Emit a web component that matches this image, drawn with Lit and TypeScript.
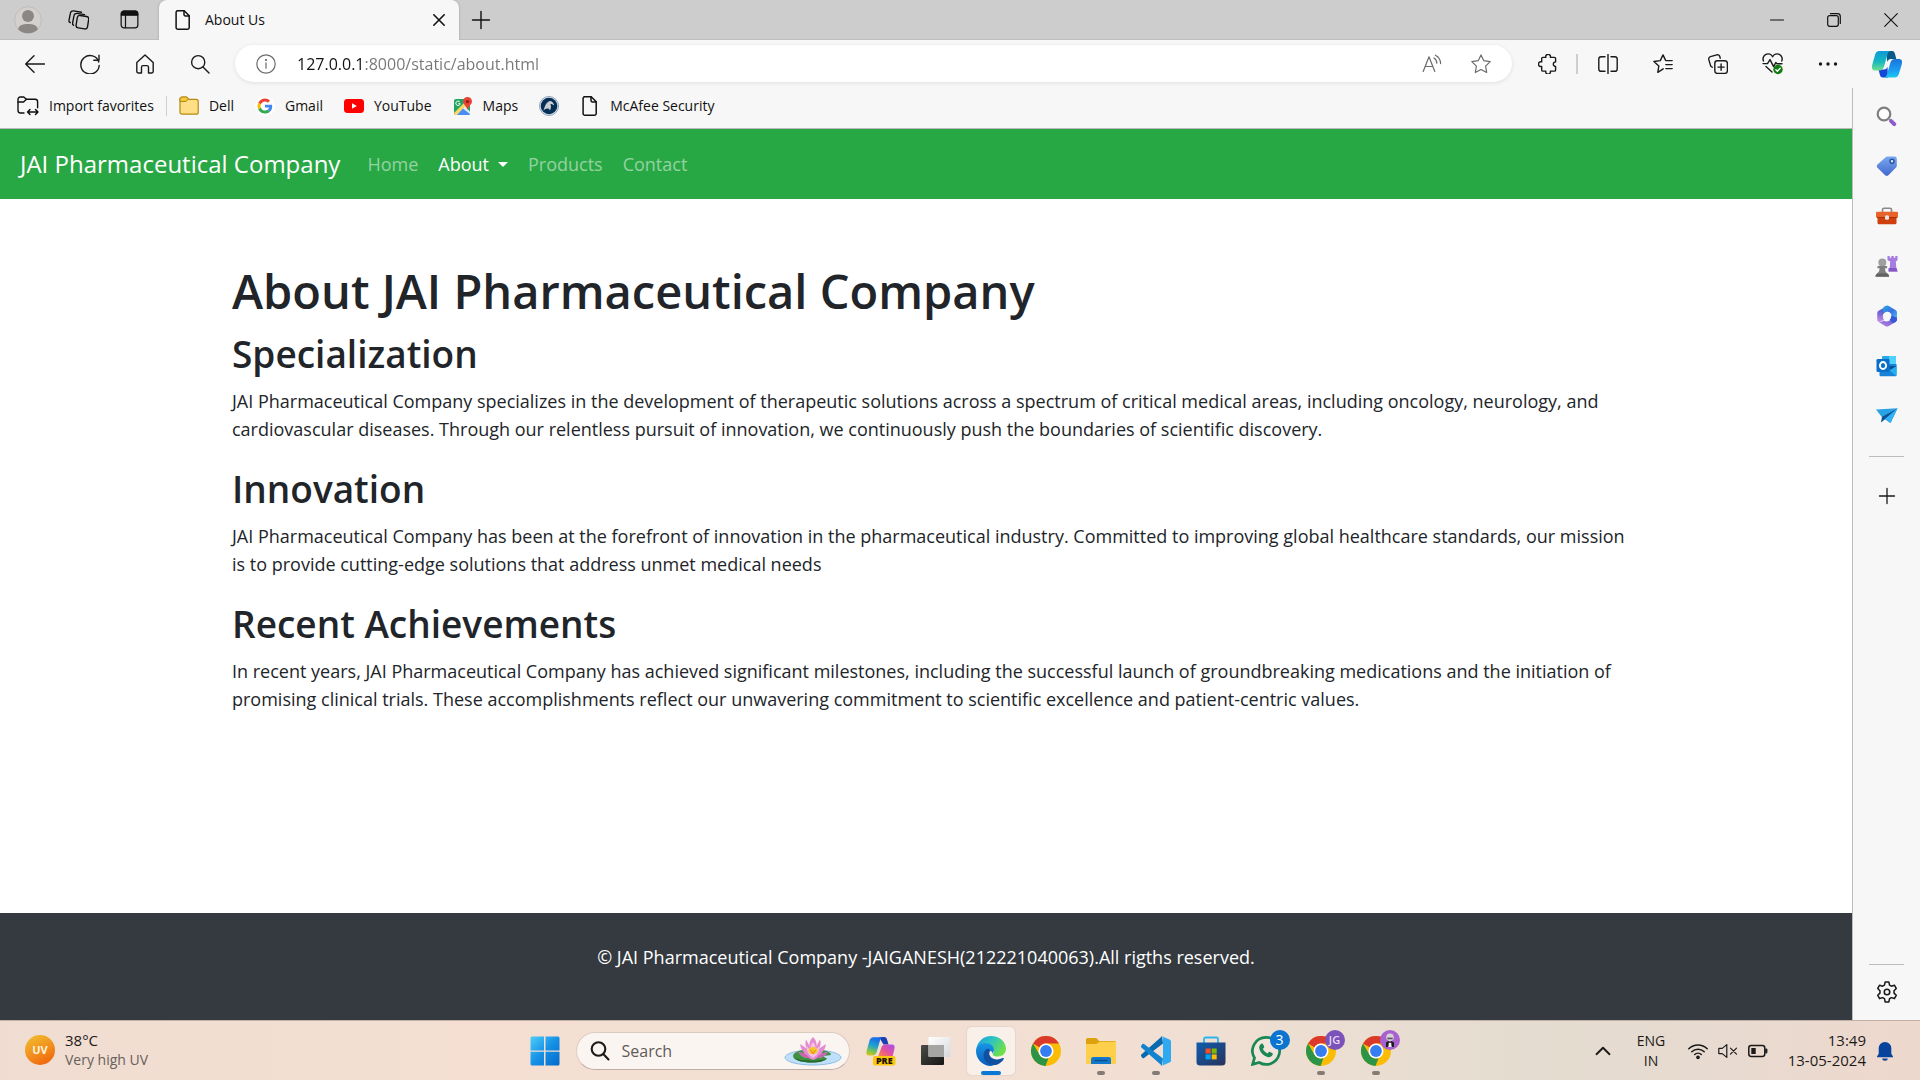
import { LitElement, html, css, svg, nothing } from "lit";
import { customElement, property } from "lit/decorators.js";
import type { TemplateResult } from "lit";

type Icon = TemplateResult;

/* Outline icon on a 20-unit grid. */
const line = (body: unknown, size = 20, width = 1.3): Icon => html`
  <svg width=${size} height=${size} viewBox="0 0 20 20" fill="none" stroke="currentColor"
    stroke-width=${width} stroke-linecap="round" stroke-linejoin="round" aria-hidden="true">${body}</svg>`;

/* Colour icon on its own grid. */
const art = (body: unknown, w: number, h = w, box = `0 0 ${w} ${h}`): Icon => html`
  <svg width=${w} height=${h} viewBox=${box} aria-hidden="true">${body}</svg>`;

const pageIcon = line(svg`<path d="M4 .8h7.2l5 5v11.6a1.8 1.8 0 0 1-1.8 1.8H4.9a1.8 1.8 0 0 1-1.8-1.8V2.6A1.8 1.8 0 0 1 4.9.8"/><path d="M11 1v3.6A1.4 1.4 0 0 0 12.4 6H16"/>`, 20, 1.5);

const icons = {
  avatar: art(svg`<circle cx="14" cy="14" r="13.3" fill="#d3d0cd" stroke="#bdb9b5" stroke-width=".8"/><circle cx="14" cy="10" r="6" fill="#8b8784"/><path d="M4 23.2C5.500 18.800 9 18 14 18s8.500.8 10 5.200A13.300 13.300 0 0 1 14 27.200 13.300 13.300 0 0 1 4 23.200z" fill="#8b8784"/>`, 28),
  workspaces: line(svg`<rect x="8.300" y="6.600" width="11" height="12" rx="2.400" transform="rotate(9 14 12)"/><path d="M5.400 15.500a2 2 0 0 1-1-2.300l1.300-6.800a2.600 2.600 0 0 1 3-2.200l7 1.200"/><path d="M2.200 13a2 2 0 0 1-1.200-2.400L2.300 4A2.600 2.600 0 0 1 5.300 1.800l7.500 1.300"/>`, 21),
  tabActions: line(svg`<rect x="1.200" y="1.200" width="17.600" height="17.600" rx="3"/><path d="M1.500 3.800A2.500 2.500 0 0 1 4 1.300h12a2.500 2.500 0 0 1 2.500 2.500v1.700h-17z" fill="currentColor"/><path d="M5.800 6v12.500"/>`, 19),
  close: line(svg`<path d="M4.800 4.800l10.400 10.400M15.200 4.800L4.800 15.200"/>`, 20, 1.6),
  plus: line(svg`<path d="M10 1.500v17M1.500 10h17"/>`, 20, 1.4),
  minimise: line(svg`<path d="M3.500 10h13"/>`, 20, 1.1),
  restore: line(svg`<rect x="3.700" y="5.700" width="10.600" height="10.600" rx="2"/><path d="M6.500 3.700h7a2.800 2.800 0 0 1 2.800 2.800v7"/>`, 20, 1.2),
  windowClose: line(svg`<path d="M3.700 3.700l12.600 12.600M16.300 3.700L3.700 16.300"/>`, 20, 1.1),
  back: line(svg`<path d="M19.500 10H.8M9 1.700L.7 10 9 18.300"/>`, 20, 1.4),
  refresh: line(svg`<path d="M18.800 8A9.200 9.200 0 1 0 19.200 11.500"/><path d="M19 1.200V6.300h-5.200"/>`, 20, 1.4),
  home: line(svg`<path d="M1.800 8.600L10 1l8.200 7.600v9a1.400 1.400 0 0 1-1.400 1.400h-3.300v-5.800a1.600 1.600 0 0 0-1.600-1.600H8.100a1.600 1.600 0 0 0-1.600 1.600V19H3.200a1.400 1.400 0 0 1-1.400-1.400z"/>`, 20, 1.4),
  search: line(svg`<circle cx="8.200" cy="8.200" r="6.600"/><path d="M13 13l6 6"/>`, 20, 1.4),
  info: line(svg`<circle cx="10" cy="10" r="9.200"/><path d="M10 8.800v5.400"/><circle cx="10" cy="6" r=".5" fill="currentColor"/>`, 20, 1.2),
  readAloud: line(svg`<path d="M1.200 17.500L7 2.800l5.800 14.700M3.200 12.500h7.600"/><path d="M12 4a6 6 0 0 1 2.800 5.200M13.400 1.200a9.500 9.500 0 0 1 5.200 8.400"/>`, 20, 1.2),
  star: line(svg`<path d="M10 .9l2.800 5.800 6.400.9-4.600 4.500 1.100 6.400L10 15.500l-5.700 3 1.100-6.400L.8 7.600l6.400-.9z"/>`, 20, 1.200),
  puzzle: line(svg`<path d="M4.900 3.400h2.900a2.400 2.400 0 1 1 4.600 0h4a1.200 1.200 0 0 1 1.200 1.200v3.300a2.300 2.300 0 1 0 0 4.600v3.400a1.200 1.200 0 0 1-1.200 1.200h-4a2.400 2.400 0 1 1-4.600 0H4.900a1.200 1.200 0 0 1-1.200-1.200v-3.500a2.400 2.400 0 1 1 0-4.500V4.600a1.200 1.200 0 0 1 1.200-1.200"/>`, 20, 1.4),
  split: line(svg`<path d="M7 2.700H3.200A2.400 2.400 0 0 0 .8 5.100v9.800a2.400 2.400 0 0 0 2.400 2.400H7M13 2.700h3.800a2.400 2.400 0 0 1 2.400 2.400v9.800a2.400 2.400 0 0 1-2.400 2.400H13M10 .5v19"/>`, 20, 1.4),
  favorites: line(svg`<path d="M10.200 14.800l-5.400 3.500 1-6.200L.9 7.500l6.400-.9L10 .9l2.500 5.200"/><path d="M12.800 6.600h6.400M12.800 10.600h6.400M12.800 14.600h6.400"/>`, 20, 1.4),
  collections: line(svg`<rect x="6.800" y="6.800" width="12.600" height="12.600" rx="2.600"/><path d="M13.100 10v6.200M10 13.100h6.200"/><path d="M4.200 13.200a2.400 2.400 0 0 1-1.700-1.800L.8 5.600a2.400 2.400 0 0 1 1.700-3L8.800.8a2.400 2.400 0 0 1 3 1.700l.4 1.700"/>`, 20, 1.4),
  essentials: html`<svg width="22" height="22" viewBox="0 0 22 22" fill="none" stroke="currentColor" stroke-width="1.400" stroke-linecap="round" stroke-linejoin="round" aria-hidden="true"><path d="M1.500 8A4.800 4.800 0 0 1 10.600 3.800 4.800 4.800 0 0 1 19.700 8M1 10.600h4.500L8 6.600l3.600 7 2.200-4 1.200 1.200h5M4 13.500l6 5.500"/><circle cx="16" cy="16.500" r="4.700" fill="#107c10" stroke="none"/><path d="M13.900 16.700l1.500 1.500 2.800-3" stroke="#fff"/></svg>`,
  more: line(svg`<g fill="currentColor" stroke="none"><circle cx="2.500" cy="10" r="1.700"/><circle cx="10" cy="10" r="1.700"/><circle cx="17.500" cy="10" r="1.700"/></g>`),
  copilot: html`<svg width="32" height="28" viewBox="0 0 32 28" aria-hidden="true"><defs>
      <linearGradient id="cpa" x1="0" y1="0" x2="0" y2="1"><stop offset="0" stop-color="#0d9ad8"/><stop offset=".55" stop-color="#16b8c0"/><stop offset="1" stop-color="#6fe08c"/></linearGradient>
      <linearGradient id="cpb" x1="0" y1="0" x2="0" y2="1"><stop offset="0" stop-color="#1b74d8"/><stop offset=".6" stop-color="#1a9cf5"/><stop offset="1" stop-color="#18c8f2"/></linearGradient></defs>
      <path d="M15 1h6c1.800 0 2.500 1.200 3 3L25.300 9H20c-2 0-3 1-3.700 3z" fill="#0a5a86"/>
      <path d="M17 27.500h-5c-2 0-2.700-1.300-3.200-3.100L7.500 19.500H13c2 0 3-1.300 3.500-3z" fill="#1547d6"/>
      <path d="M8.500 1H20c-2.200 0-3 1.600-3.700 3.800L13.500 15c-.9 3.300-2.200 5.500-5.500 5.500H4.200C1 20.500.5 18 1.200 15L4 5C4.800 2.300 6 1 8.500 1z" fill="url(#cpa)"/>
      <path d="M23.600 27.500H12.500c2.200 0 3-1.600 3.700-3.800L19 14c.9-3.300 2-5 5.200-5h3.600c3.200 0 3.700 2.200 3 5.200L28 23.500c-.8 2.700-2 4-4.400 4z" fill="url(#cpb)"/></svg>`,
  importFav: html`<svg width="22" height="20" viewBox="0 0 22 20" fill="none" stroke="currentColor" stroke-width="1.400" stroke-linecap="round" stroke-linejoin="round" aria-hidden="true"><path d="M7 17H3.400A2.400 2.400 0 0 1 1 14.600V3.200A2.200 2.200 0 0 1 3.200 1h3.600l2.600 2.300h8.800a2.400 2.400 0 0 1 2.400 2.400v6"/><path d="M1 6h5.600L9.400 3.300M10.500 16h10.500M13 13.400L10.500 16l2.500 2.600M18.500 13.400L21 16l-2.500 2.600"/></svg>`,
  folder: art(svg`<path d="M1 3a2 2 0 0 1 2-2h4.600L10 3.400h7.200a2 2 0 0 1 2 2v10.800a2 2 0 0 1-2 2H3a2 2 0 0 1-2-2z" fill="#ffdf85" stroke="#b58a12" stroke-width="1.200"/><path d="M1 5.600V3a2 2 0 0 1 2-2h4.200L9.400 3 7.200 5.400z" fill="#f4c73f" stroke="#b58a12" stroke-width="1"/>`, 20, 19),
  google: art(svg`<circle cx="10" cy="10" r="10" fill="#fff"/><g transform="translate(2.500 2.500) scale(.625)"><path fill="#ea4335" d="M12 4.800c1.800 0 3.300.6 4.600 1.800l3.400-3.400C17.900 1.200 15.200 0 12 0 7.300 0 3.300 2.700 1.300 6.600l4 3.100C6.200 6.900 8.900 4.800 12 4.800z"/><path fill="#4285f4" d="M23.500 12.300c0-.8-.1-1.600-.2-2.300H12v4.500h6.500c-.3 1.500-1.100 2.800-2.400 3.600l3.900 3c2.200-2.100 3.500-5.100 3.500-8.800z"/><path fill="#fbbc05" d="M5.300 14.300c-.3-.7-.4-1.500-.4-2.300s.1-1.600.4-2.300l-4-3.100C.5 8.200 0 10 0 12s.5 3.800 1.300 5.400z"/><path fill="#34a853" d="M12 24c3.200 0 6-1.100 8-2.900l-3.900-3c-1.100.7-2.500 1.200-4.100 1.200-3.100 0-5.800-2.100-6.700-5l-4 3.100C3.300 21.300 7.300 24 12 24z"/></g>`, 20),
  youtube: art(svg`<rect width="20" height="14" rx="3.400" fill="#f00"/><path d="M8 4.200v5.600L12.800 7z" fill="#fff"/>`, 20, 14),
  maps: art(svg`<rect x="1" y="2" width="16" height="16" rx="2" fill="#1fa463"/><path d="M1 16L14 3h3v5L7 18H3a2 2 0 0 1-2-2z" fill="#fdd663"/><path d="M4 18l6.500-7L17 17a2 2 0 0 1-1 1z" fill="#4b8df8"/><path d="M10 11.500l2-2 5 5V17z" fill="#e9edf1"/><path d="M14.500 0a4.500 4.500 0 0 1 4.500 4.600c0 3-3.500 4.200-4.500 8.400-1-4.200-4.500-5.400-4.500-8.400A4.500 4.500 0 0 1 14.500 0z" fill="#ea4335"/><circle cx="14.500" cy="4.600" r="1.600" fill="#8c1d18"/><path d="M6.800 5A2.200 2.200 0 1 0 7.200 6.700H5.300" stroke="#fff" fill="none"/>`, 20, 18),
  badge: art(svg`<circle cx="10" cy="10" r="9.500" fill="#dfe6ee" stroke="#8fa2b8"/><circle cx="10" cy="10" r="8.300" fill="#052f55"/><path d="M4.500 14.500C6 9.500 7.500 5.500 11.500 5c2 .2 3 2 3.800 4.500-1.200-1-2.500-1.600-3.800-1.500.8 2 .6 4.500-.6 6.500-.5-1.500-1.300-2-2.500-2-1.600 0-2.800.8-3.900 2z" fill="#c9ced3"/>`, 20),
  page: pageIcon,
  sideSearch: art(svg`<circle cx="8" cy="8" r="6.300" fill="#fff" fill-opacity=".7" stroke="#7f7f7f" stroke-width="2.200"/><path d="M12.500 12.500l2 2" stroke="#9a9a9a" stroke-width="2"/><path d="M15.200 15.200l3 3" stroke="#8e5cc9" stroke-width="4" stroke-linecap="round"/>`, 21),
  sideTag: html`<svg width="22" height="22" viewBox="0 0 22 22" aria-hidden="true"><defs><linearGradient id="tg" x1="0" y1="0" x2="0" y2="1"><stop offset="0" stop-color="#7aa9ee"/><stop offset="1" stop-color="#4169cf"/></linearGradient></defs><path d="M11.500 1.500h7A2.300 2.300 0 0 1 20.800 3.800v7a2.500 2.500 0 0 1-.8 1.800l-7.400 7.300a2.600 2.600 0 0 1-3.700 0L1.700 13a2.600 2.600 0 0 1 0-3.700l8-7.100a2.600 2.600 0 0 1 1.800-.7z" fill="url(#tg)"/><circle cx="16" cy="6.200" r="2" fill="#dbe6fb" stroke="#274f9f" stroke-width="1.400"/></svg>`,
  sideTools: art(svg`<path d="M6.500 5V2.800A1.600 1.600 0 0 1 8.100 1.200h5.800a1.600 1.600 0 0 1 1.600 1.600V5" fill="none" stroke="#8a8a8a" stroke-width="1.600"/><path d="M1.500 9h19v6.700A1.500 1.500 0 0 1 19 17.200H3a1.500 1.500 0 0 1-1.500-1.500z" fill="#d0400f"/><rect y="4.800" width="22" height="6" rx="1.200" fill="#e8632a"/><path d="M1 10.500h20" stroke="#a93208"/><rect x="9" y="8.200" width="4" height="4.600" rx="1.500" fill="#e6e6e6"/>`, 22, 18),
  sideGames: art(svg`<path d="M12.500 1h2.200v1.700h1.600V1h2.400v1.700h1.600V1h2.200v4.200l-1.700 1.300.5 6.500 1.200 3.500h-9l1.200-3.500.5-6.500-2.700-1.300z" fill="#a77be0"/><path d="M13.500 13h8l1 3.500h-9z" fill="#8458c4"/><circle cx="7.300" cy="7.500" r="4" fill="#9f9f9f"/><path d="M2.500 11h9.600v2.200H10c0 3 .8 4 2.400 5.200.8.500 1.600 1.600 1.600 3.100H.5c0-1.500.8-2.600 1.600-3.100C3.700 17.200 4.500 16.200 4.500 13.200h-2z" fill="#7f7f7f"/><path d="M.5 21.700c0-2 1-2.700 2-3.300h9.600c1 .6 2 1.300 2 3.300z" fill="#636363"/>`, 23),
  side365: html`<svg width="22" height="22" viewBox="0 0 22 22" aria-hidden="true"><defs><linearGradient id="m1" x1="0" y1="0" x2="1" y2="1"><stop offset="0" stop-color="#1fa9e6"/><stop offset=".5" stop-color="#3f6fe0"/><stop offset="1" stop-color="#43d0f6"/></linearGradient><linearGradient id="m2" x1=".5" y1="0" x2=".3" y2="1"><stop offset="0" stop-color="#3b4fc4"/><stop offset=".5" stop-color="#7a63d6"/><stop offset="1" stop-color="#c58fe6"/></linearGradient><linearGradient id="m3" x1="0" y1="1" x2="1" y2="0"><stop offset="0" stop-color="#b586e0"/><stop offset="1" stop-color="#5c50cf"/></linearGradient></defs>
      <path d="M12 .8L3 5.600A3 3 0 0 0 1.200 8.200v6.600c0 1.600 1.400 2.600 2.800 2.100l4-2.400a5 5 0 0 1-.6-5.500L14 4z" fill="url(#m2)"/>
      <path d="M9.500.9a3.500 3.500 0 0 1 3.300 0l6.700 4A3 3 0 0 1 21 7.500v6.300c0 1.200-.8 2.300-2 2.100l-3.600-2.700a5 5 0 0 0-4.400-6.800L7.200 8.800 7 4.800A3 3 0 0 1 8 1.800z" fill="url(#m1)"/>
      <path d="M21 12.500v1.800a3 3 0 0 1-1.500 2.600l-6.700 4a3.600 3.600 0 0 1-3.600 0l-6.500-3.800c2 .3 3-.3 4.800-1.600 1.700 1.300 4.200 1.300 6.200 0 1.800-1.200 2-3 1.800-4.700z" fill="url(#m3)"/>
      <path d="M15.600 10.500l5.400 3a3 3 0 0 1-1.500 3.400l-2.200 1.300-3.700-3.300z" fill="#3657d8"/>
      <circle cx="11.200" cy="11" r="3.900" fill="#f7f7f7"/></svg>`,
  sideOutlook: art(svg`<rect x="6" y="1" width="14" height="9" rx="1.200" fill="#28a8ea"/><path d="M13 1h6a1 1 0 0 1 1 1v9h-7z" fill="#50d0ff"/><path d="M3.500 9h17v11a1.200 1.200 0 0 1-1.200 1.200H4.700A1.200 1.200 0 0 1 3.500 20z" fill="#1683d8"/><path d="M20.500 10.500L13 15l7 6c.4-.2.5-.6.5-1z" fill="#1fb0f0"/><path d="M13 11h7.500L14 15z" fill="#0a4f94"/><rect x=".5" y="4" width="13" height="13" rx="1.300" fill="#0a6fc9"/><ellipse cx="7" cy="10.500" rx="3.100" ry="3.500" fill="none" stroke="#fff" stroke-width="1.900"/>`, 22),
  sideDrop: art(svg`<path d="M0 1.500L21.500.3 6 9.200z" fill="#28a3e6"/><path d="M21.500.3L14.500 15 7.300 10z" fill="#1685d3"/><path d="M21.500.3L6 8.800 5 14.500l4-3.300z" fill="#0b5394"/><path d="M21.500.3L9 11l5.500 4z" fill="#31b1f2"/>`, 22, 16),
  gear: line(svg`<circle cx="10" cy="10" r="2.500"/><path d="M8.300 1h3.400l.6 2.700 1.700 1 2.700-.9 1.700 3-2 2v2.200l2 2-1.700 3-2.700-.9-1.700 1-.6 2.900H8.300l-.6-2.900-1.700-1-2.700.9-1.700-3 2-2V8.800l-2-2 1.700-3 2.700.9 1.700-1z"/>`, 22, 1.4),
  uv: html`<svg width="30" height="30" viewBox="0 0 30 30" aria-hidden="true"><defs><linearGradient id="uvg" x1=".2" y1="0" x2=".7" y2="1"><stop offset="0" stop-color="#f0bb2c"/><stop offset=".6" stop-color="#f28a1c"/><stop offset="1" stop-color="#f0650c"/></linearGradient></defs><circle cx="15" cy="15" r="15" fill="url(#uvg)"/><text x="15" y="19" text-anchor="middle" font-family="Open Sans, sans-serif" font-size="11" font-weight="700" fill="#fff4dc">UV</text></svg>`,
  start: html`<svg width="30" height="30" viewBox="0 0 30 30" aria-hidden="true"><defs><linearGradient id="wn" gradientUnits="userSpaceOnUse" x1="0" y1="0" x2="30" y2="30"><stop offset="0" stop-color="#4fcffb"/><stop offset=".5" stop-color="#1591e6"/><stop offset="1" stop-color="#0468c8"/></linearGradient></defs><path d="M2 .5h12v14H.5V2A1.500 1.500 0 0 1 2 .5zM15.500.5H28A1.500 1.500 0 0 1 29.500 2v12.500h-14zM.5 15.700h13.500v13.800H2A1.500 1.500 0 0 1 .5 28zM15.500 15.700h14V28a1.500 1.500 0 0 1-1.500 1.500H15.500z" fill="url(#wn)"/></svg>`,
  lotus: art(svg`<ellipse cx="29" cy="21.500" rx="28" ry="7.500" fill="#bfe0fb" stroke="#8dbce6"/><path d="M9 20c0-4 9-7 19-7s19 2.500 19 5.500c-1 1.200-5 .8-6.500 1.500s1 1.500 2.500 2.500c-3 3-9 4-15 4-10 0-19-2.500-19-6.500z" fill="#3f9142"/><path d="M10 22c3 3 9 4.500 18 4.500s12-1.500 15-4c-4 1.500-9 2-15 2-8 0-14-.8-18-2.500z" fill="#276a2c"/><path d="M29 1c3 3 4 6 3.500 9L36 3.500c1 3 .8 6-.8 9L42 8c-.5 4-2 7-5 9.500l6.500-1.500c-2 4-6 6-10 6L29 24l-4.500-2c-4 0-8-2-10-6l6.500 1.500C18 15 16.500 12 16 8l6.800 4.500c-1.600-3-1.800-6-.8-9l3.500 6.500C25 7 26 4 29 1z" fill="#e58bd0"/><path d="M29 6c2 2.500 3 5 2.500 8l4-4c0 4-1 7-3 9L29 22l-3.500-3c-2-2-3-5-3-9l4 4C26 11 27 8.500 29 6z" fill="#f6bfe6"/><path d="M14.500 16c5 .5 9 2.500 11 6-4 0-9-2-11-6zM43.500 16c-5 .5-9 2.500-11 6 4 0 9-2 11-6z" fill="#c963b4"/><ellipse cx="29" cy="14.500" rx="4.500" ry="3.500" fill="#f7c531"/><path d="M26.500 14l2.500 4 2.500-4" stroke="#e08a14" fill="none"/>`, 58, 30),
  copilotPre: html`<svg width="30" height="30" viewBox="0 0 30 30" aria-hidden="true"><defs><linearGradient id="p1" x1=".3" y1="0" x2="0" y2="1"><stop offset="0" stop-color="#1b6ce8"/><stop offset=".4" stop-color="#20a4cf"/><stop offset=".75" stop-color="#8cc63f"/><stop offset="1" stop-color="#f4c20d"/></linearGradient><linearGradient id="p2" x1="1" y1="0" x2="0" y2="1"><stop offset="0" stop-color="#a64df0"/><stop offset=".5" stop-color="#e0529f"/><stop offset="1" stop-color="#ff8a3c"/></linearGradient></defs><path d="M13 1h5c2 0 2.700 1 3.200 3l1.300 4.500h-5z" fill="#1a3fb5"/><path d="M7.500 1.200h9.700c-2 .2-2.700 1.500-3.300 3.500L11 15c-.8 3-2 4.500-5 4.500H3c-2.500 0-3-2-2.400-4.500l2.800-10C4.200 2.400 5.300 1.200 7.500 1.200z" fill="url(#p1)"/><path d="M19.500 8.500h6.300c2.600 0 3.200 1.800 2.600 4.200L26.500 21H12l3.200-9c.8-2.400 1.800-3.500 4.300-3.500z" fill="url(#p2)"/><rect x="7" y="20" width="22.500" height="9.500" rx="2" fill="#fcc70f"/><text x="18.300" y="28" text-anchor="middle" font-family="Open Sans, sans-serif" font-size="9" font-weight="800" fill="#1c1400">PRE</text></svg>`,
  taskView: html`<svg width="30" height="30" viewBox="0 0 30 30" aria-hidden="true"><defs><linearGradient id="tv" x1="0" y1="0" x2="1" y2="1"><stop offset="0" stop-color="#4b4b49"/><stop offset="1" stop-color="#151515"/></linearGradient><linearGradient id="tw" x1="0" y1="0" x2="1" y2="1"><stop offset="0" stop-color="#fff"/><stop offset="1" stop-color="#d6d8dc"/></linearGradient></defs><rect x="0" y="9" width="23" height="20" rx="1" fill="url(#tv)"/><rect x="7.500" y="1" width="22" height="20" rx="1" fill="url(#tw)"/><path d="M7.500 9H23v12H8.500a1 1 0 0 1-1-1z" fill="#a5a5a4"/></svg>`,
  edge: html`<svg width="30" height="30" viewBox="0 0 30 30" aria-hidden="true"><defs><linearGradient id="e1" x1="0" y1="0" x2="1" y2=".5"><stop offset="0" stop-color="#1b9de0"/><stop offset=".5" stop-color="#2cc3c4"/><stop offset="1" stop-color="#6fe04a"/></linearGradient><linearGradient id="e2" x1="0" y1="0" x2="0" y2="1"><stop offset="0" stop-color="#1796e4"/><stop offset="1" stop-color="#0a5cbf"/></linearGradient></defs><path d="M.4 12.500C1.600 5.500 7.500 0 15 0c8.500 0 15 6 15 12.800 0 4.400-3.300 7.700-8 7.700-4 0-5.700-1.500-5.300-2.600.3-.7 1-1.300 1-3C17.700 11 14 7.500 9 7.500c-4 0-7 2-8.600 5z" fill="url(#e1)"/><path d="M0 15C0 10 4 7 9 7c5.500 0 8.800 3.200 9 7l-1.200 3.500c-.8-2-2-3-4-3-3 0-4 3-3.500 5.500C10 24 13 27.500 18.500 28.800 17.500 29.500 16 30 15 30 6.500 30 0 23 0 15z" fill="url(#e2)"/><path d="M11 13c-4 2.500-4.500 8-1.500 12 3 4 8.500 5 12.500 3.200 2.300-1 4.500-2.800 5.700-5.200.5-1-.3-1.300-1-.9C22 24.500 16 23.500 14 20c-1.200-2-.9-4 .3-5.300C13 13 12 12.500 11 13z" fill="#10509f"/></svg>`,
  chrome: art(svg`<circle cx="15" cy="15" r="15" fill="#fbbc05"/><path d="M2 7.500A15 15 0 0 1 28 7.500H15a7.500 7.500 0 0 0-6.500 3.800z" fill="#db3a2b"/><path d="M2 7.500L8.500 18.800A7.500 7.500 0 0 0 15 22.500l2.500-.4L14.500 30A15 15 0 0 1 2 7.500z" fill="#2b9447"/><circle cx="15" cy="15" r="7.500" fill="#fff"/><circle cx="15" cy="15" r="5.900" fill="#357df0"/>`, 30),
  explorer: art(svg`<path d="M0 3.500A1.500 1.500 0 0 1 1.500 2h8a2 2 0 0 1 1.400.6L13 5h15.500A1.500 1.500 0 0 1 30 6.500V12H0z" fill="#dca10c"/><path d="M0 8h9.500a3 3 0 0 0 2-.8L13.500 5.800H30v21a1.300 1.300 0 0 1-1.300 1.300H1.300A1.300 1.300 0 0 1 0 26.800z" fill="#fdcf4a"/><path d="M5 28.100v-5a2.200 2.200 0 0 1 2.200-2.200h15.600A2.200 2.200 0 0 1 25 23.100v5z" fill="#1278cc"/><path d="M9 24.500h12" stroke="#0c4f8c" stroke-width="1.300" stroke-linecap="round"/>`, 30),
  vscode: art(svg`<path d="M22 7.500L3 22a1.200 1.200 0 0 1-1.600-.1L.4 20.500a1.300 1.300 0 0 1 0-1.900L21 .3z" fill="#0869ae"/><path d="M22 22.500L3 8a1.200 1.200 0 0 0-1.600.1L.4 9.500a1.300 1.300 0 0 0 0 1.900L21 29.700z" fill="#1283cf"/><path d="M21 .2l8 3.600a1.800 1.800 0 0 1 1 1.600v19.200a1.800 1.800 0 0 1-1 1.600l-8 3.600c-.7.300-1.200 0-1.500-.5.900.7 2.500.1 2.500-1.300V2c0-1.400-1.600-2-2.500-1.300.3-.5.800-.8 1.500-.5z" fill="#2fa9f2"/>`, 30),
  store: html`<svg width="30" height="30" viewBox="0 0 30 30" aria-hidden="true"><defs><linearGradient id="st" x1="0" y1="0" x2="1" y2="1"><stop offset="0" stop-color="#0f5db0"/><stop offset="1" stop-color="#27335a"/></linearGradient></defs><path d="M8 7V3.200A1.700 1.700 0 0 1 9.700 1.500h10.600A1.700 1.700 0 0 1 22 3.200V7" fill="none" stroke="#2cb4ee" stroke-width="1.800"/><path d="M.5 6.500h29V26a3.500 3.500 0 0 1-3.500 3.500H4A3.500 3.500 0 0 1 .5 26z" fill="url(#st)"/><path d="M9.500 12.500h5.200v5H9.500z" fill="#f25022"/><path d="M15.700 12.500h5v5h-5z" fill="#7fba00"/><path d="M9.500 18.400h5.200v5H9.500z" fill="#00a4ef"/><path d="M15.700 18.400h5v5h-5z" fill="#ffb900"/></svg>`,
  whatsapp: art(svg`<path d="M15 1.400A13.500 13.500 0 0 0 3.500 22L1.600 28.400l6.600-1.900A13.500 13.500 0 1 0 15 1.400z" fill="#f6f1ec" fill-opacity=".4" stroke="#1b8755" stroke-width="2.700"/><path d="M10 8c.7-.6 1.700-.5 2.100.3l1 2.100c.3.700.1 1.200-.4 1.700l-.8.9c1 2 2.400 3.400 4.500 4.400l1-1c.5-.6 1-.7 1.600-.4l2.100 1.100c.8.400.9 1.300.4 2-1.100 1.800-3 2.400-5 1.800-4.100-1.200-7-4.100-8.100-7.900C7.900 11 8.500 9.200 10 8z" fill="#1b8755"/>`, 30),
  chevron: line(svg`<path d="M3.500 13.200L10 6.800l6.500 6.400"/>`, 20, 1.9),
  wifi: line(svg`<path d="M.8 7.800a13 13 0 0 1 18.400 0M3.800 10.800a8.800 8.800 0 0 1 12.400 0M6.700 13.500a4.700 4.700 0 0 1 6.600 0" stroke-width="1.500"/><circle cx="10" cy="16.300" r="1.200" fill="currentColor"/>`, 20),
  mute: line(svg`<path d="M.8 7.400h3.400l4.600-3.800v12.800l-4.600-3.800H.8zM12.500 7.200l6 6M18.500 7.200l-6 6"/>`, 20, 1.200),
  battery: line(svg`<rect x=".8" y="4.600" width="16" height="10.800" rx="2.400"/><rect x="3.300" y="7" width="4.400" height="6" fill="currentColor" stroke="none"/><path d="M18.300 8.500v3" stroke-width="2.200"/>`, 20, 1.5),
  bell: art(svg`<path d="M8 1a6.300 6.300 0 0 1 6.300 6.300v5.500L16 15.500v.7H0v-.7l1.700-2.700V7.300A6.300 6.300 0 0 1 8 1zM5.300 17.500h5.400a2.700 2.200 0 0 1-5.400 0z" fill="#08439c"/>`, 16, 20),
  photo: art(svg`<circle cx="7" cy="4.200" r="3.800" fill="#d8d3d6"/><path d="M4.300 4.600h5.400v1.700H4.300z" fill="#5b5560"/><path d="M3 14V9.500L5.500 8 7 9l1.500-1L11 9.500V14H9l-2-3.500L5 14z" fill="#1d1a20"/><path d="M5.800 9.800h2.400L8.600 14H5.400z" fill="#f2eff4"/>`, 14),
};

@customElement("icon-button")
class IconButton extends LitElement {
  @property() label = "";
  @property({ attribute: false }) icon: Icon | typeof nothing = nothing;

  static styles = css`
    :host { display: flex; }
    .button {
      display: flex; align-items: center; justify-content: center;
      flex: 1; padding: 0; border: 0; background: none; color: inherit;
    }
    svg { display: block; }
  `;

  render() {
    return html`<button class="button" type="button" aria-label=${this.label}>${this.icon}</button>`;
  }
}

@customElement("tab-strip")
class TabStrip extends LitElement {
  static styles = css`
    :host { display: flex; height: 39px; background: #cdcdcd; border-bottom: 1px solid #bfbfbf; color: #111; }
    .tools { display: flex; padding-left: 2px; }
    .tools icon-button { width: 51px; }
    .tab {
      display: flex; align-items: center; gap: 12px; box-sizing: border-box;
      width: 300px; height: 40px; margin-left: 4px; padding: 0 8px 1px 14px;
      border-radius: 8px 8px 0 0; background: #f7f7f7; box-shadow: 0 0 3px #0003;
      clip-path: inset(-3px -3px 0 -3px);
      font-size: 14px;
    }
    .title { flex: 1; }
    .tab icon-button { width: 24px; height: 24px; }
    .new { width: 44px; }
    .drag { flex: 1; }
    .window { display: flex; padding-right: 1px; }
    .window icon-button { width: 57px; }
  `;

  render() {
    return html`
      <div class="tools">
        <icon-button label="Profile" .icon=${icons.avatar}></icon-button>
        <icon-button label="Workspaces" .icon=${icons.workspaces}></icon-button>
        <icon-button label="Tab actions" .icon=${icons.tabActions}></icon-button>
      </div>
      <div class="tab">
        ${icons.page}<span class="title">About Us</span>
        <icon-button label="Close tab" .icon=${icons.close}></icon-button>
      </div>
      <icon-button class="new" label="New tab" .icon=${icons.plus}></icon-button>
      <div class="drag"></div>
      <div class="window">
        <icon-button label="Minimize" .icon=${icons.minimise}></icon-button>
        <icon-button label="Restore" .icon=${icons.restore}></icon-button>
        <icon-button label="Close" .icon=${icons.windowClose}></icon-button>
      </div>`;
  }
}

@customElement("tool-bar")
class ToolBar extends LitElement {
  static styles = css`
    :host { display: flex; align-items: center; height: 48px; padding: 0 0 1px 7px; box-sizing: border-box; background: #f7f7f7; color: #1a1a1a; }
    icon-button { width: 55px; height: 40px; }
    .address {
      display: flex; align-items: center; flex: 1; height: 37px; margin: 0 8px;
      border-radius: 19px; background: #fff; box-shadow: 0 1px 4px #0000001a; color: #6b6b6b;
    }
    .address icon-button { width: 49px; }
    .address .site { width: 62px; }
    .url {
      flex: 1; min-width: 0; padding: 0; border: 0; outline: 0; font: inherit; font-size: 16px;
      color: #767676; -webkit-text-fill-color: transparent;
      background: linear-gradient(to right, #111 67px, #767676 67px);
      background-clip: text; -webkit-background-clip: text;
    }
    .end { width: 7px; }
    .rule { width: 2px; height: 20px; margin: 0 2px 0 1px; background: #cfcfcf; }
    .copilot { width: 67px; margin-left: -2px; }
  `;

  render() {
    const left: [string, Icon][] = [["Back", icons.back], ["Refresh", icons.refresh], ["Home", icons.home], ["Search", icons.search]];
    const right: [string, Icon][] = [
      ["Split screen", icons.split], ["Favorites", icons.favorites], ["Collections", icons.collections],
      ["Browser essentials", icons.essentials], ["Settings and more", icons.more],
    ];
    const button = ([label, icon]: [string, Icon]) => html`<icon-button label=${label} .icon=${icon}></icon-button>`;
    return html`
      ${left.map(button)}
      <div class="address">
        <icon-button class="site" label="View site information" .icon=${icons.info}></icon-button>
        <input class="url" type="text" aria-label="Address" .value=${"127.0.0.1:8000/static/about.html"} />
        ${button(["Read aloud", icons.readAloud])}
        ${button(["Add to favorites", icons.star])}
        <span class="end"></span>
      </div>
      ${button(["Extensions", icons.puzzle])}
      <span class="rule"></span>
      ${right.map(button)}
      <icon-button class="copilot" label="Copilot" .icon=${icons.copilot}></icon-button>`;
  }
}

@customElement("favorites-bar")
class FavoritesBar extends LitElement {
  static styles = css`
    :host {
      display: flex; align-items: center; gap: 21px; height: 41px; padding: 0 16px 5px 17px;
      box-sizing: border-box; background: #f7f7f7; color: #111; font-size: 14px;
      border-bottom: 1px solid #bdb7bb;
    }
    .item { display: flex; align-items: center; gap: 10px; color: inherit; text-decoration: none; white-space: nowrap; }
    .button { padding: 0; border: 0; background: none; font: inherit; }
    .import { padding-right: 12px; margin-right: -9px; border-right: 1px solid #cfcfcf; }
    svg { display: block; }
  `;

  render() {
    return html`
      <button class="item button import" type="button">${icons.importFav}Import favorites</button>
      <button class="item button" type="button">${icons.folder}Dell</button>
      <a class="item" href="#gmail">${icons.google}Gmail</a>
      <a class="item" href="#youtube">${icons.youtube}YouTube</a>
      <a class="item" href="#maps">${icons.maps}Maps</a>
      <a class="item" href="#favorite" aria-label="Favorite">${icons.badge}</a>
      <a class="item" href="#mcafee">${icons.page}McAfee Security</a>`;
  }
}

@customElement("side-bar")
class SideBar extends LitElement {
  static styles = css`
    :host { display: flex; flex-direction: column; align-items: center; width: 68px; padding: 3px 0; box-sizing: border-box; background: #f7f7f7; border-left: 1px solid #bcbcbc; color: #1a1a1a; }
    icon-button { width: 50px; height: 50px; }
    .rule { width: 35px; height: 1px; margin: 15px 0 14px; border: 0; background: #bcbcbc; }
    .bottom { margin: auto 0 2px; }
  `;

  render() {
    const apps: [string, Icon][] = [
      ["Search", icons.sideSearch], ["Shopping", icons.sideTag], ["Tools", icons.sideTools], ["Games", icons.sideGames],
      ["Microsoft 365", icons.side365], ["Outlook", icons.sideOutlook], ["Drop", icons.sideDrop],
    ];
    return html`
      ${apps.map(([label, icon]) => html`<icon-button label=${label} .icon=${icon}></icon-button>`)}
      <hr class="rule" />
      <icon-button label="Customize" .icon=${line(svg`<path d="M10 2.500v15M2.500 10h15"/>`)}></icon-button>
      <hr class="rule bottom" />
      <icon-button label="Settings" .icon=${icons.gear}></icon-button>`;
  }
}

const sections = [
  {
    title: "Specialization",
    text: "JAI Pharmaceutical Company specializes in the development of therapeutic solutions across a spectrum of critical medical areas, including oncology, neurology, and cardiovascular diseases. Through our relentless pursuit of innovation, we continuously push the boundaries of scientific discovery.",
  },
  {
    title: "Innovation",
    text: "JAI Pharmaceutical Company has been at the forefront of innovation in the pharmaceutical industry. Committed to improving global healthcare standards, our mission is to provide cutting-edge solutions that address unmet medical needs",
  },
  {
    title: "Recent Achievements",
    text: "In recent years, JAI Pharmaceutical Company has achieved significant milestones, including the successful launch of groundbreaking medications and the initiation of promising clinical trials. These accomplishments reflect our unwavering commitment to scientific excellence and patient-centric values.",
  },
];

@customElement("about-page")
class AboutPage extends LitElement {
  static styles = css`
    :host { display: flex; flex-direction: column; background: #fff; color: #212529; font-size: 18px; line-height: 28px; }
    .navbar { display: flex; align-items: center; min-height: 70px; padding: 0 20px; box-sizing: border-box; background: #28a745; }
    .brand { margin-right: 17px; color: #fff; font-size: 24px; text-decoration: none; }
    .links { display: flex; margin: 0; padding: 0; list-style: none; }
    .link { display: flex; align-items: center; gap: 9px; padding: 0 10px; color: #ffffff80; text-decoration: none; }
    .active { color: #fff; }
    .caret { border: 5px solid transparent; border-top-color: currentColor; border-bottom: 0; }
    .content { flex: 1; width: 100%; max-width: 1426px; box-sizing: border-box; margin: 0 auto; padding: 62px 10px 0 19px; }
    h1, h2 { margin: 0 0 9px; font-weight: 600; }
    h1 { font-size: 47px; line-height: 60px; }
    h2 { font-size: 37px; line-height: 48px; }
    .text { margin: 0 0 22px; }
    .footer { padding: 30px 20px 49px; background: #343a40; color: #fff; text-align: center; }
    .footer p { margin: 0; }
  `;

  render() {
    return html`
      <nav class="navbar">
        <a class="brand" href="#top">JAI Pharmaceutical Company</a>
        <ul class="links">
          <li><a class="link" href="#home">Home</a></li>
          <li><a class="link active" href="#about">About<span class="caret"></span></a></li>
          <li><a class="link" href="#products">Products</a></li>
          <li><a class="link" href="#contact">Contact</a></li>
        </ul>
      </nav>
      <main class="content">
        <h1>About JAI Pharmaceutical Company</h1>
        ${sections.map((s) => html`<h2>${s.title}</h2><p class="text">${s.text}</p>`)}
      </main>
      <footer class="footer"><p>© JAI Pharmaceutical Company -JAIGANESH(212221040063).All rigths reserved.</p></footer>`;
  }
}

interface TaskItem { label: string; icon: Icon; state?: "active" | "running"; badge?: string | Icon; tone?: string }

@customElement("task-bar")
class TaskBar extends LitElement {
  static styles = css`
    :host {
      display: grid; grid-template-columns: 1fr auto 1fr; align-items: center; height: 60px; box-sizing: border-box;
      border-top: 1px solid #bfb0a8; color: #1c1a19; font-size: 15px; line-height: 20px;
      background: linear-gradient(to right, #f0ddd1, #f4dfd2 25%, #f2dfd3 60%, #e4dcd0 80%, #e8dad0 90%, #eed8cd);
    }
    svg { display: block; }
    .plain { display: flex; align-items: center; padding: 0; border: 0; background: none; color: inherit; font: inherit; line-height: 20px; }
    .weather { gap: 10px; padding: 0 0 2px 25px; text-align: left; justify-self: start; }
    .muted { color: #67605b; font-size: 14px; }
    .lines { display: flex; flex-direction: column; }
    .apps { display: flex; align-items: center; gap: 7px; }
    .task { position: relative; width: 48px; height: 48px; border-radius: 5px; }
    .task icon-button { width: 48px; height: 48px; }
    .active { background: #f9f0ea; box-shadow: 0 0 1px 1px #e6d5ca; }
    .active::after, .running::after {
      content: ""; position: absolute; left: 20px; bottom: 0; width: 8px; height: 4px; border-radius: 2px; background: #857b75;
    }
    .active::after { left: 14px; width: 20px; background: #0a78d4; }
    .badge {
      position: absolute; right: 0; top: 3px; width: 20px; height: 20px; border-radius: 50%;
      display: flex; align-items: center; justify-content: center; color: #fff; font-size: 14px; line-height: 20px;
    }
    .count { background: #0b74d0; }
    .initials { background: #7b52b9; color: #e6dbf5; font-size: 11px; font-weight: 600; }
    .photo { background: #a762d0; }
    .search {
      display: flex; align-items: center; gap: 12px; width: 274px; height: 38px; box-sizing: border-box;
      padding: 0 7px 0 13px; border: 1px solid #dccbc1; border-bottom-color: #bcaea6; border-radius: 19px; background: #fbf5f1;
    }
    .query { flex: 1; min-width: 0; padding: 0; border: 0; outline: 0; background: none; font: inherit; font-size: 16px; color: #222; }
    .query::placeholder { color: #5f5b58; opacity: 1; }
    .tray { display: flex; align-items: center; justify-self: end; padding-right: 27px; }
    .hidden { width: 40px; height: 40px; }
    .language { flex-direction: column; width: 56px; font-size: 14px; }
    .status { gap: 10px; margin-left: 9px; }
    .clock { align-items: flex-end; padding-bottom: 2px; text-align: right; width: 98px; }
    .bell { width: 16px; height: 40px; margin-left: 11px; }
  `;

  private task(item: TaskItem) {
    return html`<div class="task ${item.state ?? ""}">
      <icon-button label=${item.label} .icon=${item.icon}></icon-button>
      ${item.tone ? html`<span class="badge ${item.tone}">${item.badge}</span>` : nothing}
    </div>`;
  }

  render() {
    const tasks: TaskItem[] = [
      { label: "Copilot", icon: icons.copilotPre },
      { label: "Task view", icon: icons.taskView },
      { label: "Microsoft Edge", icon: icons.edge, state: "active" },
      { label: "Google Chrome", icon: icons.chrome },
      { label: "File Explorer", icon: icons.explorer, state: "running" },
      { label: "Visual Studio Code", icon: icons.vscode, state: "running" },
      { label: "Microsoft Store", icon: icons.store },
      { label: "WhatsApp", icon: icons.whatsapp, badge: "3", tone: "count" },
      { label: "Chrome, profile JG", icon: icons.chrome, state: "running", badge: "JG", tone: "initials" },
      { label: "Chrome, second profile", icon: icons.chrome, state: "running", badge: icons.photo, tone: "photo" },
    ];
    return html`
      <button class="plain weather" type="button">
        ${icons.uv}<span class="lines"><span>38°C</span><span class="muted">Very high UV</span></span>
      </button>
      <div class="apps">
        ${this.task({ label: "Start", icon: icons.start })}
        <label class="search">${line(svg`<circle cx="8.500" cy="8" r="6.800"/><path d="M13.500 13.200l5 5.300"/>`, 20, 2.100)}
          <input class="query" type="search" placeholder="Search" aria-label="Search" />${icons.lotus}
        </label>
        ${tasks.map((t) => this.task(t))}
      </div>
      <div class="tray">
        <icon-button class="hidden" label="Show hidden icons" .icon=${icons.chevron}></icon-button>
        <button class="plain language" type="button"><span>ENG</span><span>IN</span></button>
        <button class="plain status" type="button" aria-label="Network, volume and battery">${icons.wifi}${icons.mute}${icons.battery}</button>
        <button class="plain clock lines" type="button"><span>13:49</span><span>13-05-2024</span></button>
        <icon-button class="bell" label="Notifications" .icon=${icons.bell}></icon-button>
      </div>`;
  }
}

@customElement("app-root")
class AppRoot extends LitElement {
  static styles = css`
    :host {
      display: flex; flex-direction: column; min-height: 100vh; background: #f7f7f7;
      font-family: "Segoe UI", "Open Sans", "Noto Sans", sans-serif;
    }
    .body { display: flex; flex: 1; }
    .view { display: flex; flex-direction: column; flex: 1; min-width: 0; }
    about-page { flex: 1; }
  `;

  render() {
    return html`
      <tab-strip></tab-strip>
      <tool-bar></tool-bar>
      <div class="body">
        <div class="view">
          <favorites-bar></favorites-bar>
          <about-page></about-page>
        </div>
        <side-bar></side-bar>
      </div>
      <task-bar></task-bar>`;
  }
}
